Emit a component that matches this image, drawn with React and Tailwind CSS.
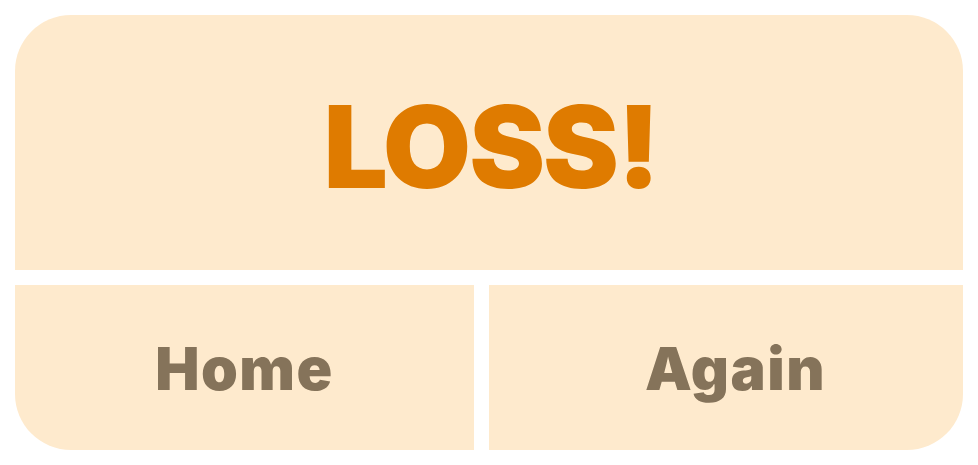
export default function App() {
  return (
    <div className="w-[978px] h-[465px] bg-white p-[15px] flex flex-col gap-[15px] font-['Inter',sans-serif]">
      <div className="h-[255px] rounded-t-[56px] bg-[#feeacd] flex items-center justify-center pt-[8px] pl-[4px]">
        <span className="text-[114px] leading-none font-black text-[#df7b00] tracking-[-2px]">LOSS!</span>
      </div>
      <div className="h-[165px] flex gap-[15px]">
        <button className="w-[459px] rounded-bl-[56px] bg-[#feeacd] flex items-center justify-center pt-[2px]">
          <span className="text-[59px] leading-none font-black text-[#85735a] tracking-[1.5px]">Home</span>
        </button>
        <button className="flex-1 rounded-br-[56px] bg-[#feeacd] flex items-center justify-center pl-[19px] pt-[2px]">
          <span className="text-[59px] leading-none font-black text-[#85735a] tracking-[1.5px]">Again</span>
        </button>
      </div>
    </div>
  );
}
